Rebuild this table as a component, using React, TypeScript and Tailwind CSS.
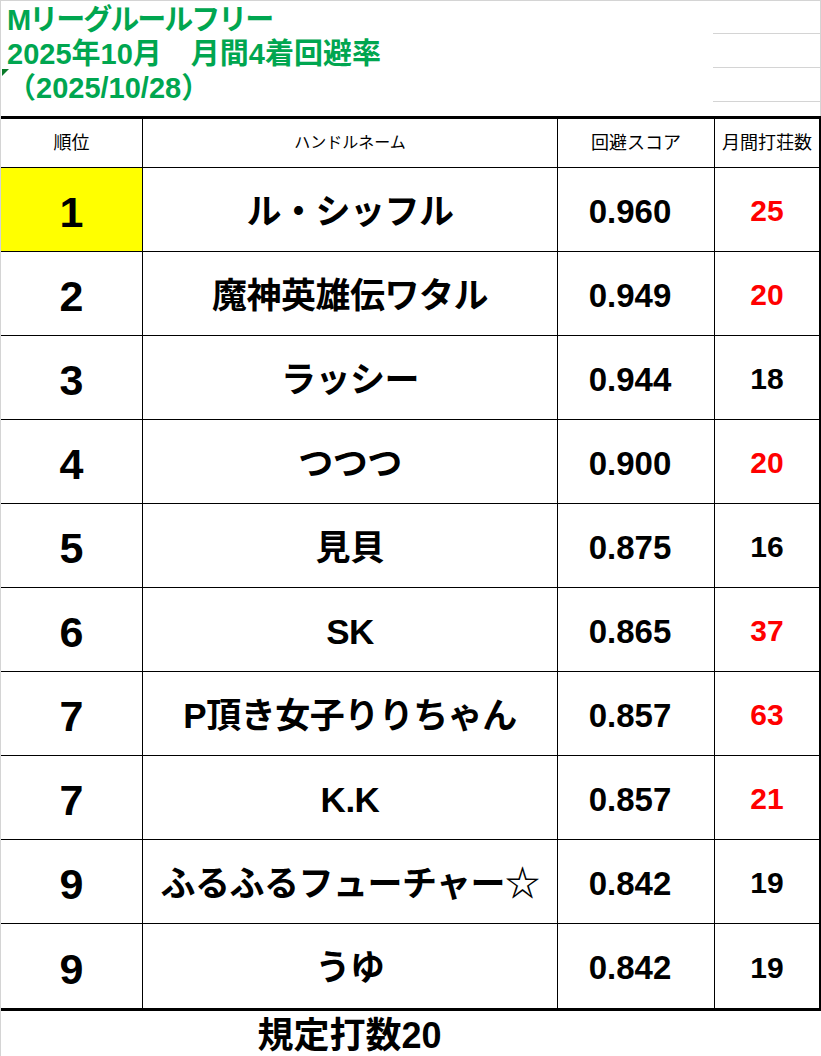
const rows = [
  { rank: "1", name: "ル・シッフル", score: "0.960", games: "25", red: true, top: true },
  { rank: "2", name: "魔神英雄伝ワタル", score: "0.949", games: "20", red: true },
  { rank: "3", name: "ラッシー", score: "0.944", games: "18", red: false },
  { rank: "4", name: "つつつ", score: "0.900", games: "20", red: true },
  { rank: "5", name: "見貝", score: "0.875", games: "16", red: false },
  { rank: "6", name: "SK", score: "0.865", games: "37", red: true },
  { rank: "7", name: "P頂き女子りりちゃん", score: "0.857", games: "63", red: true },
  { rank: "7", name: "K.K", score: "0.857", games: "21", red: true },
  { rank: "9", name: "ふるふるフューチャー☆", score: "0.842", games: "19", red: false },
  { rank: "9", name: "うゆ", score: "0.842", games: "19", red: false },
];

const jp = "font-['Liberation_Sans','Noto_Sans_CJK_JP',sans-serif]";

export default function App() {
  return (
    <div className={`relative h-[1056px] w-[821px] overflow-hidden border-t border-l border-[#d4d4d4] bg-white ${jp}`}>
      {/* title block */}
      <div className="flex h-[115px]">
        <div className="flex-1 pl-[6px] text-[29px] font-bold leading-none text-[#00a650]">
          <div className="flex h-[34px] items-end tracking-[-2px]">Mリーグルールフリー</div>
          <div className="flex h-[34px] items-end">2025年10月　月間4着回避率</div>
          <div className="flex h-[34px] items-end">（2025/10/28）</div>
        </div>
        <div className="flex w-[108px] flex-col border-r border-[#d4d4d4]">
          <div className="h-[33px] border-b border-[#d4d4d4]" />
          <div className="h-[34px] border-b border-[#d4d4d4]" />
          <div className="h-[34px] border-b border-[#d4d4d4]" />
        </div>
      </div>
      <div className="absolute top-[68px] left-[1px] h-0 w-0 border-t-[7px] border-r-[7px] border-t-[#0b7a2a] border-r-transparent" />

      {/* table */}
      <div className="w-[821px] border-t-[3px] border-r-[3px] border-b-[3px] border-black">
        <div className="flex h-[49px] border-b border-black text-[18px] leading-none text-black">
          <div className="flex w-[142px] items-center justify-center border-r border-black">順位</div>
          <div className="flex w-[415px] items-center justify-center border-r border-black text-[16px]">ハンドルネーム</div>
          <div className="flex w-[157px] items-center justify-center border-r border-black">回避スコア</div>
          <div className="flex w-[104px] items-center justify-center">月間打荘数</div>
        </div>
        {rows.map((r, i) => (
          <div
            key={i}
            className={`flex h-[84px] font-bold leading-none text-black ${i < rows.length - 1 ? "border-b border-black" : ""}`}
          >
            <div
              className={`flex w-[142px] items-center justify-center border-r border-black pt-[6px] text-[43px] ${r.top ? "bg-[#ffff00]" : ""}`}
            >
              {r.rank}
            </div>
            <div className="flex w-[415px] items-center justify-center border-r border-black pt-[3px] text-[35px] tracking-[-0.5px]">
              {r.name}
            </div>
            <div className="flex w-[157px] items-center justify-center border-r border-black pt-[3px] pr-[12px] text-[33px]">
              {r.score}
            </div>
            <div
              className={`flex w-[104px] items-center justify-center pt-[3px] text-[30px] ${r.red ? "text-[#ff0000]" : "text-black"}`}
            >
              {r.games}
            </div>
          </div>
        ))}
      </div>

      {/* footer */}
      <div className="flex h-[47px]">
        <div className="w-[141px] border-b border-[#d4d4d4]" />
        <div className="flex w-[415px] items-center justify-center pt-[2px] text-[36px] leading-none font-bold text-black">
          規定打数20
        </div>
      </div>
    </div>
  );
}
